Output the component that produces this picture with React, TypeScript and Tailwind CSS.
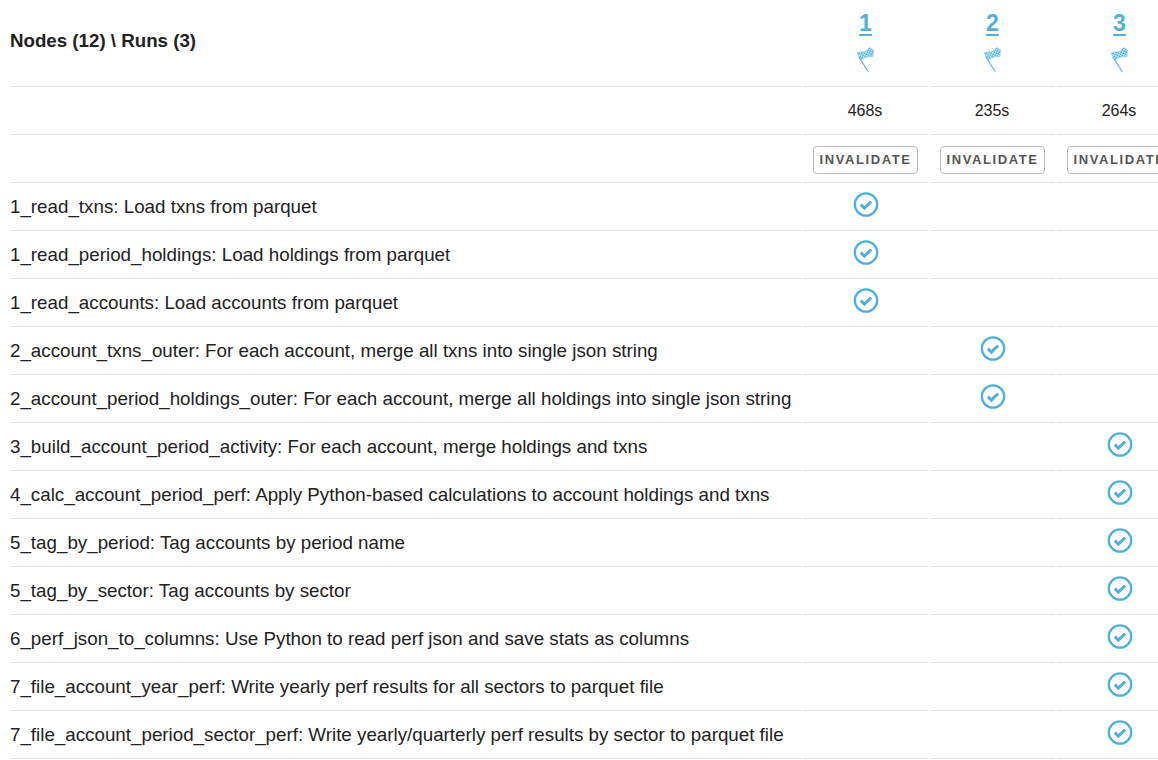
const nodes: [string, number][] = [
  ["1_read_txns: Load txns from parquet", 0],
  ["1_read_period_holdings: Load holdings from parquet", 0],
  ["1_read_accounts: Load accounts from parquet", 0],
  ["2_account_txns_outer: For each account, merge all txns into single json string", 1],
  ["2_account_period_holdings_outer: For each account, merge all holdings into single json string", 1],
  ["3_build_account_period_activity: For each account, merge holdings and txns", 2],
  ["4_calc_account_period_perf: Apply Python-based calculations to account holdings and txns", 2],
  ["5_tag_by_period: Tag accounts by period name", 2],
  ["5_tag_by_sector: Tag accounts by sector", 2],
  ["6_perf_json_to_columns: Use Python to read perf json and save stats as columns", 2],
  ["7_file_account_year_perf: Write yearly perf results for all sectors to parquet file", 2],
  ["7_file_account_period_sector_perf: Write yearly/quarterly perf results by sector to parquet file", 2],
];

const runs = [
  { id: 1, time: "468s" },
  { id: 2, time: "235s" },
  { id: 3, time: "264s" },
];

const cell = "h-12 border-b border-[#e1e1e1]";

function CheckIcon() {
  return (
    <svg width="26" height="26" viewBox="0 0 26 26" fill="none" className="block">
      <circle cx="13" cy="13.500" r="11.200" stroke="#4fb0dc" strokeWidth="2.300" />
      <path d="M7.800 13.700l3.600 3.400 6.800-6.600" stroke="#4fb0dc" strokeWidth="3" />
    </svg>
  );
}

function FlagIcon({ id }: { id: number }) {
  return (
    <svg width="18" height="26" viewBox="0 0 18 26" className="block">
      <defs>
        <pattern id={`check-${id}`} width="3.200" height="3.200" patternUnits="userSpaceOnUse" patternTransform="rotate(-20)">
          <rect width="3.200" height="3.200" fill="#c9e8f6" />
          <rect width="1.600" height="1.600" fill="#4fb0dc" />
          <rect x="1.600" y="1.600" width="1.600" height="1.600" fill="#4fb0dc" />
        </pattern>
      </defs>
      <path
        d="M1 6C4 4 8 6 11 3.500L13.500 0.500 17.500 3 17 9.500C13 9.500 9 10 5 12.500Z"
        fill={`url(#check-${id})`}
        stroke="#7cc4e6"
        strokeWidth="0.600"
      />
      <path d="M2.700 9.700 12.300 24.700" stroke="#4fb0dc" strokeWidth="1.100" />
    </svg>
  );
}

export default function App() {
  return (
    <div className="h-[760px] w-[1158px] overflow-hidden bg-white pl-[10px] font-['Liberation_Sans',Arial,sans-serif] text-[18.77px] text-[#222222]">
      <div className="grid w-[1172px] grid-cols-[791px_125px_125px_125px] gap-x-[2px]">
        <div className="flex h-[87px] items-center border-b border-[#e1e1e1] pb-[4px] text-[18.72px] font-bold">Nodes (12) \ Runs (3)</div>
        {runs.map((r) => (
          <div key={r.id} className="flex h-[87px] flex-col items-center border-b border-[#e1e1e1] pt-[9px]">
            <a href="#" className="text-[23px] leading-[28px] font-bold text-[#4fb0dc] underline decoration-2 underline-offset-[3px]">
              {r.id}
            </a>
            <div className="mt-[10px] -ml-px">
              <FlagIcon id={r.id} />
            </div>
          </div>
        ))}

        <div className={cell} />
        {runs.map((r) => (
          <div key={r.id} className={`${cell} flex items-center justify-center text-[16px]`}>
            <span className="-ml-px">{r.time}</span>
          </div>
        ))}

        <div className={cell} />
        {runs.map((r) => (
          <div key={r.id} className={`${cell} flex items-center justify-center pt-[3px]`}>
            <button className="h-[28px] w-[105px] shrink-0 rounded-[4px] border border-[#bbbbbb] bg-white text-[13px] font-bold tracking-[1.6px] text-[#555555]">
              INVALIDATE
            </button>
          </div>
        ))}

        {nodes.map(([label, run]) => (
          <div key={label} className="contents">
            <div className={`${cell} flex items-center whitespace-nowrap pt-[2px]`}>{label}</div>
            {runs.map((r, i) => (
              <div key={r.id} className={`${cell} flex justify-center pt-[8px]`}>
                {i === run && (
                  <div className="ml-px">
                    <CheckIcon />
                  </div>
                )}
              </div>
            ))}
          </div>
        ))}
      </div>
    </div>
  );
}
